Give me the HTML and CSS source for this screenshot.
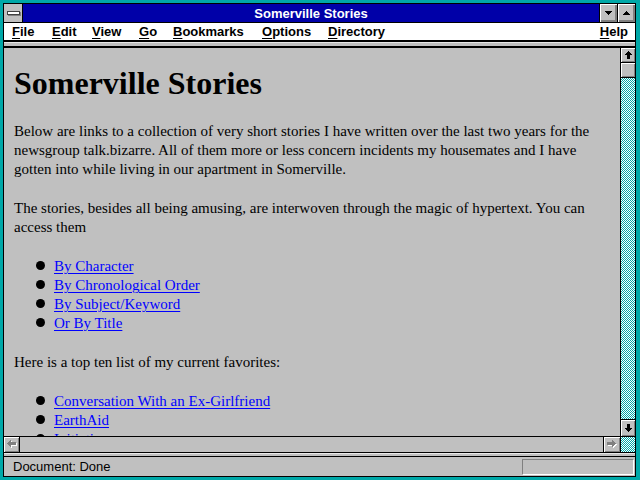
FILE: index.html
```html
<!DOCTYPE html>
<html>
<head>
<meta charset="utf-8">
<title>Somerville Stories</title>
<link rel="stylesheet" href="styles.css">
</head>
<body>
<svg class="defs" width="0" height="0" aria-hidden="true">
  <defs>
    <pattern id="chk" width="2" height="2" patternUnits="userSpaceOnUse">
      <rect width="2" height="2" fill="#00a8a8"/>
      <rect width="1" height="1" fill="#ffffff"/>
      <rect x="1" y="1" width="1" height="1" fill="#ffffff"/>
    </pattern>
  </defs>
</svg>
<div class="frame">
  <div class="win">
    <div class="titlebar">
      <div class="sysmenu"><span class="sysbar"></span></div>
      <div class="title">Somerville Stories</div>
      <div class="tbtn"><svg width="7" height="4" viewBox="0 0 7 4" shape-rendering="crispEdges"><path d="M0 0h7v1H0z M1 1h5v1H1z M2 2h3v1H2z M3 3h1v1H3z" fill="#000"/></svg></div>
      <div class="tbtn"><svg width="7" height="4" viewBox="0 0 7 4" shape-rendering="crispEdges"><path d="M3 0h1v1H3z M2 1h3v1H2z M1 2h5v1H1z M0 3h7v1H0z" fill="#000"/></svg></div>
    </div>
    <div class="menubar">
      <span class="mi mi-file"><u>F</u>ile</span>
      <span class="mi mi-edit"><u>E</u>dit</span>
      <span class="mi mi-view"><u>V</u>iew</span>
      <span class="mi mi-go"><u>G</u>o</span>
      <span class="mi mi-book"><u>B</u>ookmarks</span>
      <span class="mi mi-opt"><u>O</u>ptions</span>
      <span class="mi mi-dir"><u>D</u>irectory</span>
      <span class="mi mi-help"><u>H</u>elp</span>
    </div>
    <div class="sep-top"></div>
    <div class="view">
      <div class="doc">
        <h1>Somerville Stories</h1>
        <p>Below are links to a collection of very short stories I have written over the last two years for the newsgroup talk.bizarre. All of them more or less concern incidents my housemates and I have gotten into while living in our apartment in Somerville.</p>
        <p>The stories, besides all being amusing, are interwoven through the magic of hypertext. You can access them</p>
        <ul>
          <li><a href="#">By Character</a></li>
          <li><a href="#">By Chronological Order</a></li>
          <li><a href="#">By Subject/Keyword</a></li>
          <li><a href="#">Or By Title</a></li>
        </ul>
        <p>Here is a top ten list of my current favorites:</p>
        <ul>
          <li><a href="#">Conversation With an Ex-Girlfriend</a></li>
          <li><a href="#">EarthAid</a></li>
          <li><a href="#">Initiation</a></li>
        </ul>
      </div>
      <div class="vscroll">
        <div class="sbtn sbtn-up"><svg width="7" height="8" viewBox="0 0 7 8" shape-rendering="crispEdges"><path d="M3 0h1v1H3z M2 1h3v1H2z M1 2h5v1H1z M0 3h7v1H0z M2 4h3v4H2z" fill="#000"/></svg></div>
        <div class="thumb"></div>
        <svg class="track" shape-rendering="crispEdges"><rect width="100%" height="100%" fill="url(#chk)"/></svg>
        <div class="sbtn sbtn-down"><svg width="7" height="8" viewBox="0 0 7 8" shape-rendering="crispEdges"><path d="M2 0h3v4H2z M0 4h7v1H0z M1 5h5v1H1z M2 6h3v1H2z M3 7h1v1H3z" fill="#000"/></svg></div>
      </div>
    </div>
    <div class="hscroll">
      <div class="hbtn hbtn-left"><svg width="10" height="9" viewBox="0 0 10 9" shape-rendering="crispEdges"><path transform="translate(1,1)" d="M0 3h1v1H0z M1 2h1v3H1z M2 1h1v5H2z M3 0h1v7H3z M4 2h5v3H4z" fill="#fff"/><path d="M0 3h1v1H0z M1 2h1v3H1z M2 1h1v5H2z M3 0h1v7H3z M4 2h5v3H4z" fill="#808080"/></svg></div>
      <div class="htrack"></div>
      <div class="hbtn hbtn-right"><svg width="10" height="9" viewBox="0 0 10 9" shape-rendering="crispEdges"><path transform="translate(1,1)" d="M8 3h1v1H8z M7 2h1v3H7z M6 1h1v5H6z M5 0h1v7H5z M0 2h5v3H0z" fill="#fff"/><path d="M8 3h1v1H8z M7 2h1v3H7z M6 1h1v5H6z M5 0h1v7H5z M0 2h5v3H0z" fill="#808080"/></svg></div>
      <svg class="corner" shape-rendering="crispEdges"><rect width="100%" height="100%" fill="url(#chk)"/></svg>
    </div>
    <div class="sep-bottom"></div>
    <div class="status">
      <span class="status-text">Document: Done</span>
      <div class="progress"></div>
    </div>
  </div>
</div>
</body>
</html>
```
FILE: styles.css
```css
* { box-sizing: border-box; }
html, body { margin: 0; padding: 0; }
body {
  width: 640px;
  height: 480px;
  overflow: hidden;
  font-family: "Liberation Sans", Arial, sans-serif;
}
.defs { position: absolute; width: 0; height: 0; }
.frame {
  width: 640px;
  height: 480px;
  background: #00a8a8;
  padding: 3px 4px 3px 3px;
}
.win {
  height: 100%;
  border: 1px solid #000;
  background: #c0c0c0;
  display: flex;
  flex-direction: column;
}

/* title bar */
.titlebar {
  flex: none;
  height: 19px;
  display: flex;
  border-bottom: 1px solid #000;
}
.sysmenu {
  width: 19px;
  border-right: 1px solid #000;
  background: #c0c0c0;
  display: flex;
  align-items: center;
  justify-content: center;
}
.sysbar {
  width: 13px;
  height: 4px;
  background: #fff;
  border: 1px solid #404040;
  box-shadow: 1px 1px 0 #808080;
}
.title {
  flex: 1;
  background: #0000a8;
  color: #fff;
  font-weight: bold;
  font-size: 13px;
  line-height: 18px;
  padding-top: 1px;
  text-align: center;
}
.tbtn {
  width: 18px;
  border-left: 1px solid #000;
  background: #c0c0c0;
  box-shadow: inset 1px 1px #fff, inset -1px -1px #808080, inset -2px -2px #808080;
  display: flex;
  align-items: center;
  justify-content: center;
  padding-bottom: 1px;
}

/* menu bar */
.menubar {
  flex: none;
  height: 18px;
  background: #fff;
  border-bottom: 1px solid #000;
  display: flex;
  font-weight: bold;
  font-size: 13px;
  line-height: 15px;
  padding-top: 1px;
  padding-left: 8px;
  color: #000;
}
.mi u { text-decoration-thickness: 1px; text-underline-offset: 2px; }
.mi-file { width: 40px; }
.mi-edit { width: 40px; }
.mi-view { width: 47px; }
.mi-go { width: 34px; }
.mi-book { width: 89px; }
.mi-opt { width: 66px; }
.mi-help { margin-left: auto; padding-right: 7px; }

.sep-top {
  flex: none;
  height: 7px;
  border-top: 1px solid #000;
  border-bottom: 2px solid #000;
  background: #c0c0c0;
  box-shadow: inset 0 1px #e8e8e8;
}
.sep-bottom {
  flex: none;
  height: 4px;
  border-bottom: 1px solid #000;
  background: #c0c0c0;
  box-shadow: inset 0 1px #e8e8e8;
}

/* document view */
.view {
  flex: 1;
  min-height: 0;
  display: flex;
}
.doc {
  flex: 1;
  overflow: hidden;
  padding: 0 10px;
  font-family: "Liberation Serif", "Times New Roman", serif;
  font-size: 15px;
  line-height: 19px;
  color: #000;
}
.doc h1 {
  font-size: 32px;
  line-height: 36px;
  font-weight: bold;
  margin: 17px 0 21px;
}
.doc p { margin: 0 0 20px; }
.doc ul {
  list-style: none;
  margin: 0 0 20px;
  padding: 0;
}
.doc li {
  display: flex;
  align-items: center;
  height: 19px;
}
.doc li::before {
  content: "";
  flex: none;
  width: 9px;
  height: 9px;
  border-radius: 50%;
  background: #000;
  margin-left: 22px;
  margin-right: 9px;
  margin-bottom: 2px;
}
.doc a {
  color: #0000ff;
  text-decoration: underline;
  text-decoration-thickness: 1px;
  text-underline-offset: 2px;
}

/* vertical scrollbar */
.vscroll {
  flex: none;
  width: 15px;
  border-left: 1px solid #000;
  display: flex;
  flex-direction: column;
}
.sbtn, .thumb {
  flex: none;
  height: 15px;
  background: #c0c0c0;
  box-shadow: inset 1px 1px #fff, inset -1px -1px #808080;
  display: flex;
  align-items: center;
  justify-content: center;
}
.sbtn-up, .thumb { border-bottom: 1px solid #000; }
.sbtn-down { border-top: 1px solid #000; height: 17px; }
.track {
  display: block;
  flex: 1;
  width: 14px;
  min-height: 0;
}

/* horizontal scrollbar */
.hscroll {
  flex: none;
  height: 17px;
  border-top: 1px solid #000;
  border-bottom: 1px solid #000;
  display: flex;
}
.hbtn {
  flex: none;
  background: #c0c0c0;
  box-shadow: inset 1px 1px #fff, inset -1px -1px #808080;
  display: flex;
  align-items: center;
  justify-content: center;
}
.hbtn-left { width: 16px; border-right: 1px solid #000; }
.hbtn-right { width: 18px; border-left: 1px solid #000; border-right: 1px solid #000; }
.htrack { flex: 1; background: #c0c0c0; }
.corner { display: block; flex: none; width: 14px; height: 15px; }

/* status bar */
.status {
  flex: none;
  height: 19px;
  display: flex;
  align-items: center;
  justify-content: space-between;
  padding-left: 9px;
  font-size: 13px;
  color: #000;
}
.progress {
  width: 112px;
  height: 16px;
  border-top: 1px solid #808080;
  border-left: 1px solid #808080;
  border-bottom: 1px solid #fff;
  border-right: 1px solid #fff;
  margin-right: 1px;
}
```
